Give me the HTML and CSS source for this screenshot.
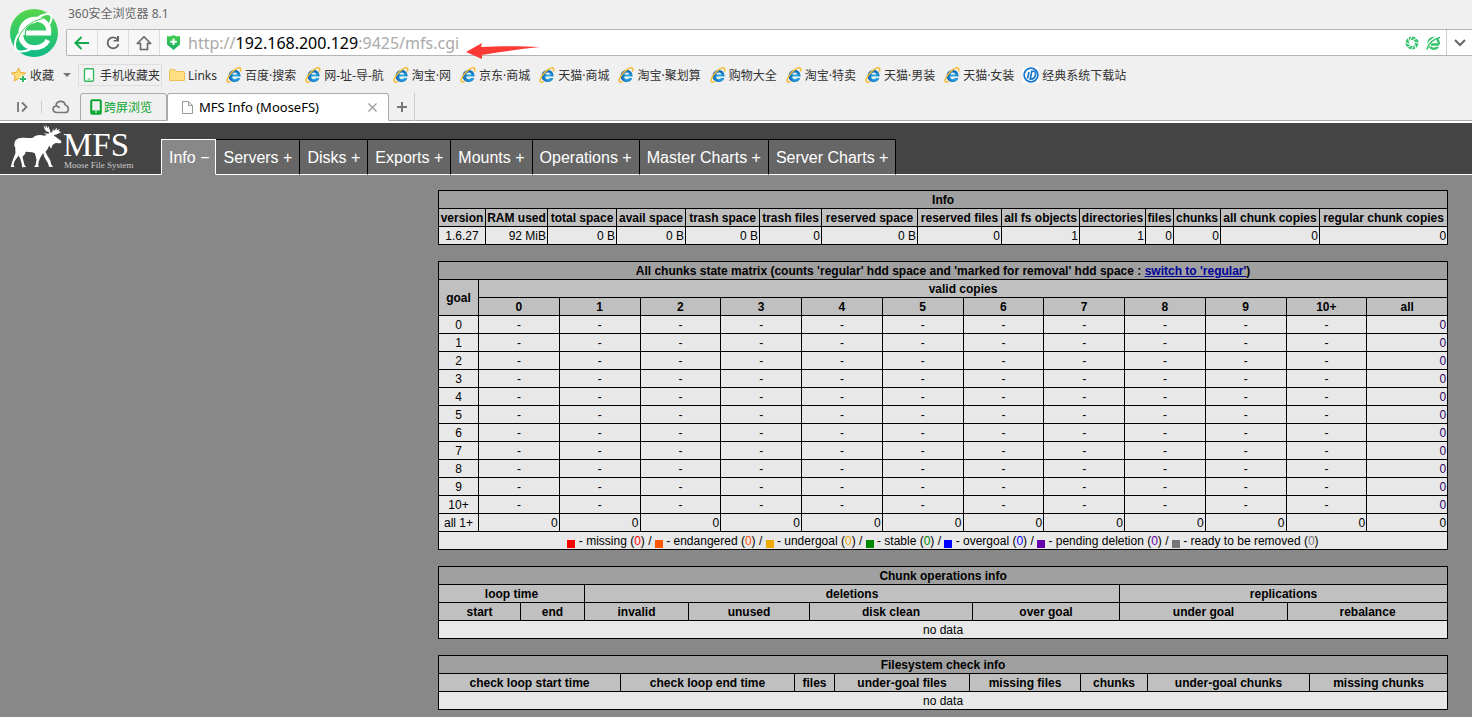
FILE: index.html
```html
<!DOCTYPE html>
<html lang="zh-CN">
<head>
<meta charset="utf-8">
<title>MFS Info (MooseFS)</title>
<link rel="stylesheet" href="styles.css">
</head>
<body>
<svg class="sprite" aria-hidden="true">
  <defs>
    <linearGradient id="g-logo" x1="0" y1="0" x2="0" y2="1"><stop offset="0" stop-color="#58d64c"/><stop offset="1" stop-color="#0dba86"/></linearGradient>
    <linearGradient id="g-shield" x1="0" y1="0" x2="0" y2="1"><stop offset="0" stop-color="#46cf4d"/><stop offset="1" stop-color="#14ae62"/></linearGradient>
    <radialGradient id="g-ie" cx=".6" cy=".6" r=".6"><stop offset="0" stop-color="#35c4f5"/><stop offset="1" stop-color="#0b5cae"/></radialGradient>
    <symbol id="ie" viewBox="0 0 16 16">
      <path d="M14.6 9.6H6.2c.1 1.700 1.100 2.600 2.500 2.600 1 0 1.700-.4 2.100-1.200h3.500c-.8 2.600-2.900 4-5.600 4C5 15 2.600 12.600 2.600 9s2.500-6.100 6-6.100c3.800 0 6.100 2.500 6 6.700zM6.300 7.500h4.900c-.1-1.300-1-2.100-2.400-2.100-1.300 0-2.300.8-2.500 2.100z" fill="url(#g-ie)"/>
      <path d="M14.300 4.600C15 2.800 14.900 1.400 14 1 11.900.2 7 3.400 4 7.400c-2.700 3.600-3.600 6.700-2.300 7.500.7.400 1.800.1 3-.6" fill="none" stroke="#f3bd35" stroke-width="1.500"/>
    </symbol>
  </defs>
</svg>

<header class="browser">
  <div class="top">
    <svg class="logo" viewBox="0 0 48 48" aria-hidden="true">
      <circle cx="24" cy="24" r="24" fill="url(#g-logo)"/>
      <path d="M8.500 25C2.500 35 4.500 43.500 12 42.500c3-.3 6-1 9-2.500" fill="none" stroke="#fff" stroke-width="2"/>
      <path d="M27 9c6-3.500 12-5 14-2.500 1.200 2 0 6-2 9.500" fill="none" stroke="#fff" stroke-width="2"/>
      <path d="M16 24h22.700C39.500 15.500 34 10.300 25.500 10.300 16.500 10.300 10.700 16.500 10.700 25S16.500 38.700 24.500 38.700c6.500 0 11-2.700 13.500-7.500" fill="none" stroke="#fff" stroke-width="5"/>
      <path d="M13.500 26C12 19 18 13 26 12.200" fill="none" stroke="#fff" stroke-width="3"/>
      <path d="M7.500 33C9 22 19 12.500 33 9.500" fill="none" stroke="#3fce58" stroke-width="1"/>
    </svg>
    <div class="app-title">360安全浏览器 8.1</div>
    <div class="address">
      <button class="nav-btn" aria-label="后退"><svg width="18" height="16" viewBox="0 0 18 16"><path d="M16 8H3M8.500 2 2.500 8l6 6" fill="none" stroke="#12a84b" stroke-width="2"/></svg></button>
      <button class="nav-btn" aria-label="刷新"><svg width="16" height="16" viewBox="0 0 16 16"><path d="M12.500 4.500A5.500 5.500 0 1 0 13.500 9" fill="none" stroke="#666" stroke-width="1.800"/><path d="M14 1v5.500H8.500V5h3.500V1z" fill="#666"/></svg></button>
      <button class="nav-btn" aria-label="主页"><svg width="16" height="16" viewBox="0 0 16 16"><path d="M.8 9 8 1.800 15.200 9M1 8.500h3.500v6h7v-6H15" fill="none" stroke="#666" stroke-width="1.600"/></svg></button>
      <svg class="shield" width="13" height="15" viewBox="0 0 13 15" aria-hidden="true"><path d="M0 1c3 .8 4.500 0 6.500-1C8.500 1 10 1.800 13 1v8.500L6.500 15 0 9.500z" fill="url(#g-shield)"/><path d="M6.500 3.500v6.500M3.200 6.700h6.600" stroke="#fff" stroke-width="2"/></svg>
      <div class="url" role="textbox" aria-label="地址" contenteditable="true" spellcheck="false">http://<b>192.168.200.129</b>:9425/mfs.cgi</div>
      <svg class="tool" width="14" height="14" viewBox="0 0 14 14" aria-hidden="true"><circle cx="7" cy="7" r="4.700" fill="none" stroke="#35c46b" stroke-width="3.600"/><path d="M7 0 5 5M12 2 7.500 4.500M14 7.500 9.500 6M11 13 9.500 8M6 14l2.500-4M1.500 11.500l5-2M0 6l4.500 2.500M3 1.500 4.500 6" stroke="#fff" stroke-width="1"/></svg>
      <svg class="tool" width="15" height="14" viewBox="0 0 15 14" aria-hidden="true"><path d="M12.800 8.500H5M3 11.500C1 6 4 2 8 2c3 0 5 2.500 4.800 6.500M4 11c2 2.500 6 2 8 0" fill="none" stroke="#35c46b" stroke-width="2.400"/><path d="M1 14C1 8 7 1.500 14 1" fill="none" stroke="#fff" stroke-width="3"/><path d="M1 13.500C2 8 7 3 14 1.500" fill="none" stroke="#35c46b" stroke-width="1.600"/></svg>
      <button class="nav-btn drop" aria-label="历史"><svg width="12" height="8" viewBox="0 0 12 8"><path d="m1 1 5 5 5-5" fill="none" stroke="#666" stroke-width="2"/></svg></button>
      <svg class="arrow" width="74" height="16" viewBox="0 0 74 16" aria-hidden="true"><path d="M0 9 16 0 15 4C34 3 56 3 74 4 54 6 34 9 16 12v4z" fill="#fb3a35"/></svg>
    </div>
  </div>

  <nav class="bookmarks" aria-label="收藏栏">
    <a class="bm fav" href="#"><svg width="16" height="16" viewBox="0 0 16 16"><path d="m7.500 1 2 4.500 5 .5-3.700 3.200 1 4.800-4.300-2.500L3.200 14l1-4.800L.5 6l5-.5z" fill="#ffdf75" stroke="#e8aa2c"/><path d="M12 8.500v7M8.500 12h7" stroke="#fff" stroke-width="4"/><path d="M12 9v6M9 12h6" stroke="#2fb566" stroke-width="2"/></svg>收藏</a>
    <svg class="caret" width="8" height="4" viewBox="0 0 8 4" aria-hidden="true"><path d="M0 0h8L4 4z" fill="#777"/></svg>
    <a class="bm phone" href="#"><svg width="12" height="14" viewBox="0 0 12 14"><rect x="1.500" y=".7" width="9" height="12.600" rx="1" fill="#fff" stroke="#35b85e" stroke-width="1.400"/><path d="M4.500 11h3" stroke="#35b85e"/></svg>手机收藏夹</a>
    <a class="bm" href="#"><svg width="16" height="16" viewBox="0 0 16 16"><path d="M.5 3.500q0-1 1-1h4l2 2h7q1 0 1 1v8H.5z" fill="#ffdf82" stroke="#ecc257"/></svg>Links</a>
    <a class="bm" href="#"><svg width="16" height="16"><use href="#ie"/></svg>百度·搜索</a>
    <a class="bm" href="#"><svg width="16" height="16"><use href="#ie"/></svg>网-址-导-航</a>
    <a class="bm" href="#"><svg width="16" height="16"><use href="#ie"/></svg>淘宝·网</a>
    <a class="bm" href="#"><svg width="16" height="16"><use href="#ie"/></svg>京东·商城</a>
    <a class="bm" href="#"><svg width="16" height="16"><use href="#ie"/></svg>天猫·商城</a>
    <a class="bm" href="#"><svg width="16" height="16"><use href="#ie"/></svg>淘宝·聚划算</a>
    <a class="bm" href="#"><svg width="16" height="16"><use href="#ie"/></svg>购物大全</a>
    <a class="bm" href="#"><svg width="16" height="16"><use href="#ie"/></svg>淘宝·特卖</a>
    <a class="bm" href="#"><svg width="16" height="16"><use href="#ie"/></svg>天猫·男装</a>
    <a class="bm" href="#"><svg width="16" height="16"><use href="#ie"/></svg>天猫·女装</a>
    <a class="bm" href="#"><svg width="16" height="16" viewBox="0 0 16 16"><path d="M0 0h16v16H0z" fill="#fff"/><circle cx="8" cy="8" r="6.900" fill="none" stroke="#1976c8" stroke-width="1.700"/><path d="M6 5 4.500 11.500M9 3.500 7 13M8.500 4.500c4-1 4.500 1 4 3.500s-2 4-4.500 4" fill="none" stroke="#1976c8" stroke-width="1.700"/></svg>经典系统下载站</a>
  </nav>

  <div class="tabs">
    <button class="tab-tool side" aria-label="侧栏"><svg width="12" height="12" viewBox="0 0 12 12"><path d="M1 1v10M5 1.500 9.500 6 5 10.500" fill="none" stroke="#777" stroke-width="1.800"/></svg></button>
    <button class="tab-tool cloud" aria-label="云"><svg width="18" height="14" viewBox="0 0 18 14"><path d="M5 12.500C0 12.500 0 6.500 4 6c0-5.500 8-6.500 9.300-1 4 1 4.200 7.500-.3 7.500zM4 6.200c1.500-.3 3 .5 3.500 2" fill="none" stroke="#777" stroke-width="1.600"/></svg></button>
    <button class="tab cross"><svg width="12" height="16" viewBox="0 0 12 16"><rect x="1.200" y="1.200" width="9.600" height="13.600" rx="1" fill="none" stroke="#0aa52f" stroke-width="2"/><path d="M1 13h10" stroke="#0aa52f" stroke-width="3"/><path d="M5 13h2" stroke="#fff"/></svg>跨屏浏览</button>
    <div class="tab active"><svg width="11" height="13" viewBox="0 0 11 13"><path d="M.5.5h6l4 4v8H.5zM6.500.5v4h4" fill="#fff" stroke="#999"/></svg><span class="tab-name">MFS Info (MooseFS)</span><button class="close" aria-label="关闭"><svg width="9" height="9" viewBox="0 0 9 9"><path d="m.5.5 8 8m0-8-8 8" stroke="#999" stroke-width="1.200"/></svg></button></div>
    <button class="tab-tool new" aria-label="新标签"><svg width="10" height="10" viewBox="0 0 10 10"><path d="M5 0v10M0 5h10" stroke="#777" stroke-width="2"/></svg></button>
  </div>
</header>

<div class="mfs-head">
  <a class="brand" href="#" aria-label="Moose File System">
    <svg class="moose" viewBox="30 12 158 132" aria-hidden="true"><path d="M46 61C53 52 66 52 80 54L97 54C104 44 122 43 132 47L140 45 130 40 145 41 148 37C136 36 132 27 130 15L136 25 137 14 142 25 145 19 148 28 152 38 156 37 159 25 161 34 167 26 171 23 169 31 179 27 175 33 183 36 172 42 160 46 168 52 178 59C187 63 184 71 178 70L166 69 157 75 153 86 147 77 141 89 136 95 141 106 150 120 153 133 159 140 147 141 143 129 133 112 129 99 121 112 116 124 114 134 116 141 102 141 107 133 109 118 104 100 96 97 77 95 74 103 67 110 69 119 73 135 78 141 66 142 65 133 60 115 55 107 50 114 43 124 40 134 43 141 32 141 35 128 41 112 46 99 45 82C43 78 40 76 46 61Z" fill="#fff"/></svg>
    <span class="wordmark"><span class="big">MFS</span><span class="small">Moose File System</span></span>
  </a>
  <nav class="menu">
    <a class="on" href="#">Info −</a><a href="#">Servers +</a><a href="#">Disks +</a><a href="#">Exports +</a><a href="#">Mounts +</a><a href="#">Operations +</a><a href="#">Master Charts +</a><a href="#">Server Charts +</a>
  </nav>
</div>

<main class="content">
  <table class="info">
    <colgroup><col><col><col><col><col><col><col><col><col><col><col><col><col><col></colgroup>
    <tr class="title"><th colspan="14">Info</th></tr>
    <tr><th>version</th><th>RAM used</th><th>total space</th><th>avail space</th><th>trash space</th><th>trash files</th><th>reserved space</th><th>reserved files</th><th>all fs objects</th><th>directories</th><th>files</th><th>chunks</th><th>all chunk copies</th><th>regular chunk copies</th></tr>
    <tr class="num"><td class="mid">1.6.27</td><td>92 MiB</td><td>0 B</td><td>0 B</td><td>0 B</td><td>0</td><td>0 B</td><td>0</td><td>1</td><td>1</td><td>0</td><td>0</td><td>0</td><td>0</td></tr>
  </table>

  <table class="matrix">
    <colgroup><col><col><col><col><col><col><col><col><col><col><col><col><col></colgroup>
    <tr class="title"><th colspan="13">All chunks state matrix (counts 'regular' hdd space and 'marked for removal' hdd space : <a href="#">switch to 'regular'</a>)</th></tr>
    <tr><th rowspan="2">goal</th><th colspan="12">valid copies</th></tr>
    <tr><th>0</th><th>1</th><th>2</th><th>3</th><th>4</th><th>5</th><th>6</th><th>7</th><th>8</th><th>9</th><th>10+</th><th>all</th></tr>
    <tr><td>0</td><td>-</td><td>-</td><td>-</td><td>-</td><td>-</td><td>-</td><td>-</td><td>-</td><td>-</td><td>-</td><td>-</td><td class="zero">0</td></tr>
    <tr><td>1</td><td>-</td><td>-</td><td>-</td><td>-</td><td>-</td><td>-</td><td>-</td><td>-</td><td>-</td><td>-</td><td>-</td><td class="zero">0</td></tr>
    <tr><td>2</td><td>-</td><td>-</td><td>-</td><td>-</td><td>-</td><td>-</td><td>-</td><td>-</td><td>-</td><td>-</td><td>-</td><td class="zero">0</td></tr>
    <tr><td>3</td><td>-</td><td>-</td><td>-</td><td>-</td><td>-</td><td>-</td><td>-</td><td>-</td><td>-</td><td>-</td><td>-</td><td class="zero">0</td></tr>
    <tr><td>4</td><td>-</td><td>-</td><td>-</td><td>-</td><td>-</td><td>-</td><td>-</td><td>-</td><td>-</td><td>-</td><td>-</td><td class="zero">0</td></tr>
    <tr><td>5</td><td>-</td><td>-</td><td>-</td><td>-</td><td>-</td><td>-</td><td>-</td><td>-</td><td>-</td><td>-</td><td>-</td><td class="zero">0</td></tr>
    <tr><td>6</td><td>-</td><td>-</td><td>-</td><td>-</td><td>-</td><td>-</td><td>-</td><td>-</td><td>-</td><td>-</td><td>-</td><td class="zero">0</td></tr>
    <tr><td>7</td><td>-</td><td>-</td><td>-</td><td>-</td><td>-</td><td>-</td><td>-</td><td>-</td><td>-</td><td>-</td><td>-</td><td class="zero">0</td></tr>
    <tr><td>8</td><td>-</td><td>-</td><td>-</td><td>-</td><td>-</td><td>-</td><td>-</td><td>-</td><td>-</td><td>-</td><td>-</td><td class="zero">0</td></tr>
    <tr><td>9</td><td>-</td><td>-</td><td>-</td><td>-</td><td>-</td><td>-</td><td>-</td><td>-</td><td>-</td><td>-</td><td>-</td><td class="zero">0</td></tr>
    <tr><td>10+</td><td>-</td><td>-</td><td>-</td><td>-</td><td>-</td><td>-</td><td>-</td><td>-</td><td>-</td><td>-</td><td>-</td><td class="zero">0</td></tr>
    <tr class="num"><td class="mid">all 1+</td><td>0</td><td>0</td><td>0</td><td>0</td><td>0</td><td>0</td><td>0</td><td>0</td><td>0</td><td>0</td><td>0</td><td>0</td></tr>
    <tr><td colspan="13"><i class="box missing"></i> - missing (<span class="t-missing">0</span>) / <i class="box endangered"></i> - endangered (<span class="t-endangered">0</span>) / <i class="box undergoal"></i> - undergoal (<span class="t-undergoal">0</span>) / <i class="box stable"></i> - stable (<span class="t-stable">0</span>) / <i class="box overgoal"></i> - overgoal (<span class="t-overgoal">0</span>) / <i class="box pending"></i> - pending deletion (<span class="t-pending">0</span>) / <i class="box ready"></i> - ready to be removed (<span class="t-ready">0</span>)</td></tr>
  </table>

  <table class="ops">
    <colgroup><col><col><col><col><col><col><col><col></colgroup>
    <tr class="title"><th colspan="8">Chunk operations info</th></tr>
    <tr><th colspan="2">loop time</th><th colspan="4">deletions</th><th colspan="2">replications</th></tr>
    <tr><th>start</th><th>end</th><th>invalid</th><th>unused</th><th>disk clean</th><th>over goal</th><th>under goal</th><th>rebalance</th></tr>
    <tr><td colspan="8">no data</td></tr>
  </table>

  <table class="check">
    <colgroup><col><col><col><col><col><col><col><col></colgroup>
    <tr class="title"><th colspan="8">Filesystem check info</th></tr>
    <tr><th>check loop start time</th><th>check loop end time</th><th>files</th><th>under-goal files</th><th>missing files</th><th>chunks</th><th>under-goal chunks</th><th>missing chunks</th></tr>
    <tr><td colspan="8">no data</td></tr>
  </table>
</main>
</body>
</html>
```

FILE: styles.css
```css
* { box-sizing: border-box; }
html { background: #888; }
body {
  margin: 0;
  background: #888;
  color: #000;
  font: 12px/17px "Liberation Sans", Arial, sans-serif;
}
svg { display: block; flex: none; }
button { border: 0; padding: 0; margin: 0; background: none; font: inherit; }
.sprite { position: absolute; width: 0; height: 0; }

/* Browser chrome */
.browser {
  background: #f0f0f0;
  border-bottom: 2px solid #fff;
  font-family: "Noto Sans", "Noto Sans CJK SC", sans-serif;
}
.top {
  display: grid;
  grid-template-columns: 66px 1fr;
  grid-template-rows: 29px 27px;
}
.logo { grid-row: 1 / 3; width: 48px; height: 48px; margin: 9px 0 0 10px; }
.app-title { padding-left: 2px; line-height: 28px; color: #666; }
.address {
  position: relative;
  display: flex;
  align-items: center;
  background: #fff;
  border: 1px solid #b4b4b4;
  border-right: 0;
  border-radius: 2px 0 0 2px;
}
.nav-btn {
  display: flex;
  align-items: center;
  justify-content: center;
  align-self: stretch;
  width: 31px;
  background: #f7f7f7;
  border-right: 1px solid #ddd;
}
.nav-btn.drop { width: 26px; background: #fff; border: 0; border-left: 1px solid #ccc; }
.shield { margin: 0 8px 0 7px; }
.url { flex: 1; font-size: 16px; line-height: 24px; color: #aaa; outline: 0; }
.url b { font-weight: normal; color: #000; }
.tool { margin-right: 7px; }
.tool + .tool { margin-right: 5px; }
.arrow { position: absolute; left: 399px; top: 13px; }

.bookmarks {
  display: flex;
  align-items: center;
  gap: 9px;
  height: 22px;
  margin-top: 8px;
  padding-left: 11px;
  white-space: nowrap;
}
.bm { display: flex; align-items: center; gap: 3px; color: #333; text-decoration: none; }
.caret { margin: 0 -1px 0 0; }
.phone { height: 22px; padding: 0 1px 0 4px; gap: 5px; border: 1px solid #ddd; margin: 0 -2px 0 -1px; }

.tabs {
  display: flex;
  align-items: flex-end;
  height: 28px;
  margin-top: 7px;
  box-shadow: inset 0 -1px #aaa;
}
.tab-tool { display: flex; align-items: center; justify-content: center; height: 28px; }
.side { width: 42px; padding-left: 3px; background: linear-gradient(#ccc, #ccc) right center / 1px 12px no-repeat; }
.cloud { width: 38px; }
.new { width: 26px; border-right: 1px solid #ccc; }
.tab {
  display: flex;
  align-items: center;
  height: 28px;
  border: 1px solid #aaa;
  border-radius: 3px 3px 0 0;
}
.cross { width: 87px; padding-left: 9px; gap: 2px; color: #0aa52f; }
.active { width: 222px; padding: 0 11px 0 14px; background: #fff; border-bottom-color: #fff; }
.tab-name { flex: 1; padding-left: 6px; font-size: 13px; }

/* Site header */
.mfs-head {
  display: flex;
  align-items: flex-end;
  height: 52px;
  background: #444;
  box-shadow: inset 0 -1px #fff;
}
.brand { display: flex; width: 161px; height: 52px; padding-left: 10px; color: #fff; text-decoration: none; }
.moose { width: 53px; height: 44px; margin-top: 1px; }
.wordmark {
  display: flex;
  flex-direction: column;
  font-family: "Liberation Serif", "Times New Roman", serif;
  white-space: nowrap;
  padding-top: 7px;
}
.big { font-size: 33px; line-height: 31px; }
.small { padding-left: 1px; font-size: 9px; line-height: 9px; color: #ccc; }
.menu { display: flex; font-size: 16px; line-height: 35px; white-space: nowrap; }
.menu a {
  height: 36px;
  padding: 0 7px;
  color: #fff;
  text-decoration: none;
  background: #666;
  border-top: 1px solid #000;
  border-right: 1px solid #000;
  border-bottom: 1px solid #fff;
}
.menu .on { padding: 0 6px 0 7px; background: #888; border: 1px solid #fff; border-bottom-color: #888; }

/* Data tables */
.content { display: grid; gap: 16px; padding: 15px 24px 8px 438px; }
table {
  width: 100%;
  table-layout: fixed;
  border-collapse: collapse;
  white-space: nowrap;
  text-align: center;
}
tr { height: 18px; }
th, td { padding: 2px 1px 0; border: 1px solid #000; line-height: 15px; }
th { background: #c0c0c0; }
td { background: #e8e8e8; }
.title th { background: #a0a0a0; }
.num td, .zero { text-align: right; }
.num .mid { text-align: center; }
th a { color: #000099; }
.zero { color: #330066; }

.info col:nth-child(1) { width: 47px; }
.info col:nth-child(2) { width: 62px; }
.info col:nth-child(3) { width: 69px; }
.info col:nth-child(4) { width: 69px; }
.info col:nth-child(5) { width: 74px; }
.info col:nth-child(6) { width: 62px; }
.info col:nth-child(7) { width: 96px; }
.info col:nth-child(8) { width: 84px; }
.info col:nth-child(9) { width: 78px; }
.info col:nth-child(10) { width: 66px; }
.info col:nth-child(11) { width: 28px; }
.info col:nth-child(12) { width: 47px; }
.info col:nth-child(13) { width: 99px; }
.info col:nth-child(14) { width: 128px; }

.matrix col:first-child { width: 40px; }

.ops col:nth-child(1) { width: 82px; }
.ops col:nth-child(2) { width: 64px; }
.ops col:nth-child(3) { width: 104px; }
.ops col:nth-child(4) { width: 121px; }
.ops col:nth-child(5) { width: 163px; }
.ops col:nth-child(6) { width: 147px; }
.ops col:nth-child(7) { width: 168px; }
.ops col:nth-child(8) { width: 160px; }

.check col:nth-child(1) { width: 182px; }
.check col:nth-child(2) { width: 174px; }
.check col:nth-child(3) { width: 40px; }
.check col:nth-child(4) { width: 135px; }
.check col:nth-child(5) { width: 111px; }
.check col:nth-child(6) { width: 67px; }
.check col:nth-child(7) { width: 162px; }
.check col:nth-child(8) { width: 138px; }

.box { display: inline-block; width: 8px; height: 8px; vertical-align: -3px; }
.missing { background: #f00; }
.endangered { background: #ff5500; }
.undergoal { background: #eeaa00; }
.stable { background: #008800; }
.overgoal { background: #0000ff; }
.pending { background: #6600aa; }
.ready { background: #777; }
.t-missing { color: #f00; }
.t-endangered { color: #ff5500; }
.t-undergoal { color: #eeaa00; }
.t-stable { color: #008800; }
.t-overgoal { color: #0000ff; }
.t-pending { color: #6600aa; }
.t-ready { color: #777; }
```
